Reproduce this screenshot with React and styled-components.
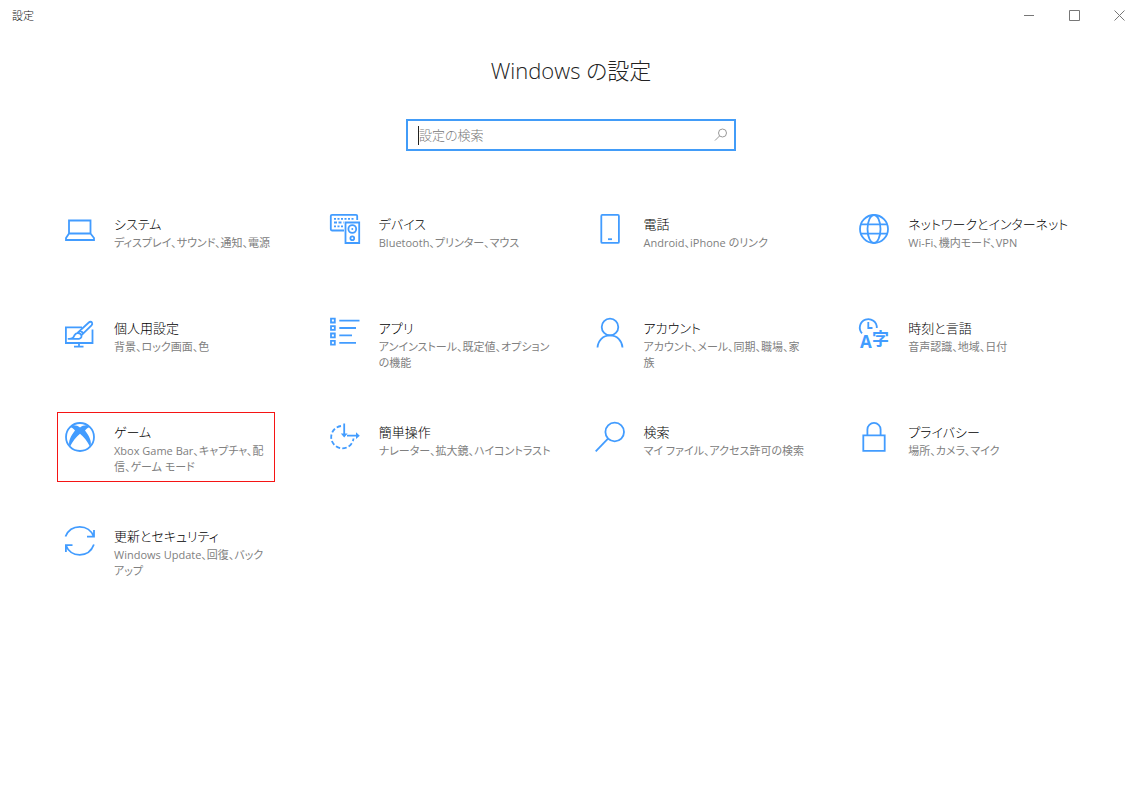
import React from "react";
import styled, { createGlobalStyle } from "styled-components";

const GlobalStyle = createGlobalStyle`
  *, *::before, *::after { box-sizing: border-box; }
  body {
    margin: 0;
    background: #fff;
    color: #333;
    font-family: "Open Sans", "Noto Sans CJK JP", sans-serif;
    font-feature-settings: "palt";
  }
`;

const Page = styled.div`
  min-height: 100vh;
  background: #fff;
`;

const TitleBar = styled.header`
  display: flex;
  align-items: center;
  justify-content: space-between;
  height: 31px;
  padding-left: 12px;
`;

const WindowName = styled.span`
  font-size: 11px;
  line-height: 16px;
  font-weight: 300;
  color: #111;
`;

const WindowButtons = styled.div`
  display: flex;
`;

const WindowButton = styled.button`
  display: flex;
  align-items: center;
  justify-content: center;
  width: 45px;
  height: 31px;
  padding: 0;
  border: 0;
  background: transparent;
  color: #777;
`;

const Heading = styled.h1`
  margin: 23px 0 0;
  font-size: 22px;
  line-height: 32px;
  font-weight: 300;
  text-align: center;
  color: #222;
`;

const SearchBox = styled.label`
  display: flex;
  align-items: center;
  width: 330px;
  height: 32px;
  margin: 33px auto 0;
  padding: 0 6px 0 10px;
  border: 2px solid #429cf8;
  color: #999;
`;

const Caret = styled.span`
  width: 1px;
  height: 19px;
  background: #222;
`;

const SearchInput = styled.input`
  flex: 1;
  min-width: 0;
  padding: 0;
  border: 0;
  outline: 0;
  background: transparent;
  font: inherit;
  font-size: 13px;
  font-weight: 300;
  font-feature-settings: inherit;
  color: #222;
  &::placeholder { color: #777; opacity: 1; }
`;

const Grid = styled.nav`
  display: grid;
  grid-template-columns: repeat(4, 1fr);
  row-gap: 34px;
  padding: 53px 26px 40px 57px;
`;

const Tile = styled.a`
  display: flex;
  gap: 19px;
  width: 218px;
  height: 70px;
  padding: 9px 7px;
  border: 1px solid ${(p) => (p.$marked ? "#f51414" : "transparent")};
  color: inherit;
  text-decoration: none;
  white-space: nowrap;
`;

const TileIcon = styled.svg`
  flex: none;
  width: 30px;
  height: 30px;
  overflow: visible;
  fill: none;
  stroke: #429cff;
  stroke-width: 1.8;
`;

const TileTitle = styled.div`
  font-size: 13px;
  line-height: 21px;
  font-weight: 300;
  color: #000;
`;

const TileText = styled.div`
  font-size: 11px;
  line-height: 16px;
  color: #808080;
`;

const Glyph = styled.text`
  fill: #429cff;
  stroke: none;
  font-weight: 700;
`;

const fill = { fill: "#429cff", stroke: "none" };

const icons = {
  system: (
    <path d="M4 6.500H25.500V19.500H4ZM4 19.500L1 24V26H29V24L25.500 19.500" />
  ),
  devices: (
    <>
      <path d="M14 16.500H2Q.8 16.500 .8 15.300V2Q.8 .9 2 .9H26Q27.200 .9 27.200 2V6" />
      <path strokeDasharray="2 1.500" d="M4 4.800H25" />
      <path strokeDasharray="3 1.500" d="M4 8.500H13.500" />
      <path strokeDasharray="2 1.500" d="M4 12.300H13.500" />
      <path d="M15.500 8.500H29.200V29H15.500Z" />
      <circle cx="22.300" cy="15" r="3.900" />
      <circle cx="22.300" cy="15" r="1" {...fill} />
      <circle cx="22.300" cy="24.300" r="1.900" />
    </>
  ),
  phone: (
    <>
      <rect x="6.300" y=".9" width="17.600" height="28" rx="1" />
      <path d="M13 25.200H17" />
    </>
  ),
  network: (
    <g>
      <circle cx="15" cy="15" r="14" />
      <ellipse cx="15" cy="15" rx="6.500" ry="14" />
      <path d="M2 10.300H28M2 19.700H28" />
    </g>
  ),
  personal: (
    <>
      <path d="M17 9.300H.9V25H27.500V11.500M14 25V28.500M9 28.600H18.500" />
      <path
        strokeLinejoin="round"
        d="M3.500 20.800C8 21 8.300 19.500 9.500 17.200C11 14.800 13.500 14.300 15.500 16C17.500 18 16.500 20.300 14 20.900ZM12.500 14.800L23.800 4.500C25 3.400 26.300 3.600 27 4.600C27.500 5.500 27.400 6.400 26.500 7.400L16.300 17.400M15.200 12.500L18.700 15.500"
      />
    </>
  ),
  apps: (
    <>
      <path d="M1 .7H4.800V4.500H1ZM1 8.100H4.800V11.900H1ZM1 15.500H4.800V19.300H1ZM1 22.900H4.800V26.700H1Z" />
      <path d="M9.300 2.600H29.500M9.300 10H26M9.300 17.400H22M9.300 24.800H26" />
    </>
  ),
  account: (
    <>
      <circle cx="15" cy="9" r="8.300" />
      <path d="M2.500 29.500C3 22.500 8 17.400 15 17.400S27 22.500 27.500 29.500" />
    </>
  ),
  time: (
    <>
      <path d="M3 15.300A8.500 8.500 0 1 1 17.800 10" />
      <path d="M9.300 4V10H13.500" />
      <Glyph x="1" y="30" fontSize="17">A</Glyph>
      <Glyph x="13" y="27" fontSize="17">字</Glyph>
    </>
  ),
  game: (
    <>
      <circle cx="15" cy="15" r="14" />
      <path
        {...fill}
        d="M5 4.800C8 2.200 12 3.600 15 5.400C18 3.600 22 2.200 25 4.800C23 5.600 21.500 6.800 20 8.600C24 13.500 27.500 20 25.200 25C22.500 19.500 18.500 14.500 15 11.800C11.500 14.500 7.500 19.500 4.800 25C2.500 20 6 13.500 10 8.600C8.500 6.800 7 5.600 5 4.800Z"
      />
    </>
  ),
  ease: (
    <>
      <path strokeDasharray="4.500 2.200" d="M11 4A11.200 11.200 0 1 0 23.500 16.500" />
      <path d="M14.200 1.500V13.500M17 13.700H28" />
      <path {...fill} d="M10.800 11.500H17.600L14.200 15.500ZM26 10.300L29.800 13.700L26 17.100Z" />
    </>
  ),
  search: (
    <>
      <circle cx="19.700" cy="10" r="9.300" />
      <path d="M13 16.700L.7 29.300" />
    </>
  ),
  privacy: (
    <path d="M4.300 13.300H25.700V28.900H4.300ZM8.400 13.300V7.500A6.600 6.600 0 0 1 21.600 7.500V13.300" />
  ),
  update: (
    <path d="M.5 10.500C3 4.500 8.500 .9 14.700 .9C21 .9 26.500 4.500 28.700 10.500M29 4V10.700H22M28.900 18.500C26.500 25 21 28.800 14.700 28.800C8.500 28.800 3 25 .8 19M.9 26V19.200H7.500" />
  ),
};

const categories = [
  { icon: "system", title: "システム", lines: ["ディスプレイ、サウンド、通知、電源"] },
  { icon: "devices", title: "デバイス", lines: ["Bluetooth、プリンター、マウス"] },
  { icon: "phone", title: "電話", lines: ["Android、iPhone のリンク"] },
  { icon: "network", title: "ネットワークとインターネット", lines: ["Wi-Fi、機内モード、VPN"] },
  { icon: "personal", title: "個人用設定", lines: ["背景、ロック画面、色"] },
  { icon: "apps", title: "アプリ", lines: ["アンインストール、既定値、オプション", "の機能"] },
  { icon: "account", title: "アカウント", lines: ["アカウント、メール、同期、職場、家", "族"] },
  { icon: "time", title: "時刻と言語", lines: ["音声認識、地域、日付"] },
  { icon: "game", title: "ゲーム", lines: ["Xbox Game Bar、キャプチャ、配", "信、ゲーム モード"], marked: true },
  { icon: "ease", title: "簡単操作", lines: ["ナレーター、拡大鏡、ハイコントラスト"] },
  { icon: "search", title: "検索", lines: ["マイ ファイル、アクセス許可の検索"] },
  { icon: "privacy", title: "プライバシー", lines: ["場所、カメラ、マイク"] },
  { icon: "update", title: "更新とセキュリティ", lines: ["Windows Update、回復、バック", "アップ"] },
];

export default function App() {
  return (
    <Page lang="ja">
      <GlobalStyle />
      <TitleBar>
        <WindowName>設定</WindowName>
        <WindowButtons>
          <WindowButton aria-label="最小化">
            <svg width="11" height="11" fill="none" stroke="currentColor"><path d="M0 5.500H10" /></svg>
          </WindowButton>
          <WindowButton aria-label="最大化">
            <svg width="11" height="11" fill="none" stroke="currentColor"><path d="M.5 .5H10.500V10.500H.5Z" /></svg>
          </WindowButton>
          <WindowButton aria-label="閉じる">
            <svg width="11" height="11" fill="none" stroke="currentColor"><path d="M.5 .5L10.500 10.500M10.500 .5L.5 10.500" /></svg>
          </WindowButton>
        </WindowButtons>
      </TitleBar>
      <main>
        <Heading>Windows の設定</Heading>
        <SearchBox>
          <Caret />
          <SearchInput type="text" placeholder="設定の検索" aria-label="設定の検索" />
          <svg width="14" height="14" fill="none" stroke="currentColor">
            <circle cx="8.500" cy="5" r="4" />
            <path d="M5.500 8L1 12.500" />
          </svg>
        </SearchBox>
        <Grid>
          {categories.map((c) => (
            <Tile key={c.icon} href={`#${c.icon}`} $marked={c.marked}>
              <TileIcon viewBox="0 0 30 30" aria-hidden="true">{icons[c.icon]}</TileIcon>
              <div>
                <TileTitle>{c.title}</TileTitle>
                {c.lines.map((line) => (
                  <TileText key={line}>{line}</TileText>
                ))}
              </div>
            </Tile>
          ))}
        </Grid>
      </main>
    </Page>
  );
}
